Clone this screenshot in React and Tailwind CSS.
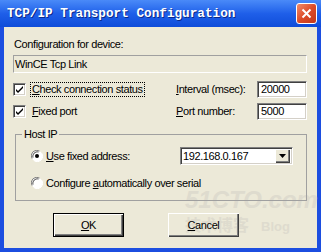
import React from 'react';

const sunken =
  'border border-t-[#808080] border-l-[#808080] border-b-white border-r-white shadow-[inset_1px_1px_0_#404040,inset_-1px_-1px_0_#d4d0c8]';

function CheckBox() {
  return (
    <div className={`w-[13px] h-[13px] bg-white flex items-center justify-center ${sunken}`}>
      <svg width="9" height="9" viewBox="0 0 9 9">
        <path d="M1 4 L3 6 L8 1 L8 3 L3 8 L1 6 Z" fill="#000" />
      </svg>
    </div>
  );
}

function Radio({ checked }) {
  return (
    <svg width="12" height="12" viewBox="0 0 12 12" className="shrink-0">
      <circle cx="6" cy="6" r="5.5" fill="#fff" />
      <path d="M1 8.5 A5.5 5.5 0 0 1 8.5 1" stroke="#808080" strokeWidth="1" fill="none" />
      <path d="M2 7.5 A4.5 4.5 0 0 1 7.5 2" stroke="#404040" strokeWidth="1" fill="none" />
      <path d="M3.5 11 A5.5 5.5 0 0 0 11 3.5" stroke="#fff" strokeWidth="1" fill="none" />
      {checked && <circle cx="6" cy="6" r="2" fill="#000" />}
    </svg>
  );
}

function U({ children }) {
  return <span className="underline underline-offset-[1px]">{children}</span>;
}

export default function App() {
  return (
    <div className="w-[321px] h-[252px] bg-[#1c4ee0] flex flex-col overflow-hidden font-['Liberation_Sans',Arial,sans-serif] text-[11px] leading-[13px] tracking-[-0.4px] text-black">
      {/* title bar */}
      <div className="h-[27px] shrink-0 flex items-center justify-between pl-[7px] pr-[4px] bg-linear-to-b from-[#4a8af8] via-[#1f5fe9] to-[#0e4cd9]">
        <span className="font-['Liberation_Mono',monospace] font-bold text-[12.7px] tracking-normal text-white [text-shadow:1px_1px_0_#0a2a8a]">
          TCP/IP Transport Configuration
        </span>
        <div className="w-[21px] h-[21px] rounded-[3px] border border-white bg-linear-to-br from-[#f08a6a] via-[#dd4b27] to-[#c2381a] flex items-center justify-center">
          <svg width="11" height="11" viewBox="0 0 11 11">
            <path d="M1.5 1.5 L9.5 9.5 M9.5 1.5 L1.5 9.5" stroke="#fff" strokeWidth="2" />
          </svg>
        </div>
      </div>

      {/* body */}
      <div className="relative isolate flex-1 mx-[4px] mb-[4px] bg-[#ece9d8] flex flex-col pl-[9px] pr-[10px] pt-[11px]">
        {/* watermark, behind the controls */}
        <div className="absolute -z-10 left-[181px] top-[160px] pointer-events-none select-none text-[#dedbce] tracking-normal">
          <div className="font-['Liberation_Sans',sans-serif] font-black italic text-[24px] leading-[26px]">51CTO.com</div>
          <div className="flex items-baseline gap-[12px]">
            <span className="font-['Noto_Sans_CJK_SC',sans-serif] font-bold text-[16px] leading-[22px]">技术博客</span>
            <span className="font-['Liberation_Sans',sans-serif] font-bold text-[13px]">Blog</span>
          </div>
        </div>

        <div className="pl-[1px]">Configuration for device:</div>
        <div className="mt-[4px] h-[18px] border border-t-[#a0a0a0] border-l-[#a0a0a0] border-b-white border-r-white px-[1px] flex items-center">
          WinCE Tcp Link
        </div>

        <div className="mt-[8px] flex flex-col gap-[5px]">
          <div className="h-[17px] flex items-center">
            <CheckBox />
            <span className="ml-[5px] px-[1px] outline outline-1 outline-dotted outline-black">
              <U>C</U>heck connection status
            </span>
            <span className="ml-auto w-[81px]">
              <U>I</U>nterval (msec):
            </span>
            <div className={`w-[50px] h-[17px] bg-white px-[3px] flex items-center ${sunken}`}>20000</div>
          </div>
          <div className="h-[17px] flex items-center">
            <CheckBox />
            <span className="ml-[6px]">
              <U>F</U>ixed port
            </span>
            <span className="ml-auto w-[81px]">
              <U>P</U>ort number:
            </span>
            <div className={`w-[50px] h-[17px] bg-white px-[3px] flex items-center ${sunken}`}>5000</div>
          </div>
        </div>

        <fieldset className="mt-[8px] ml-[2px] h-[73px] border border-[#a0a0a0] pl-[15px] pr-[13px]">
          <legend className="ml-[-9px] px-[2px]">Host IP</legend>
          <div className="mt-[6px] h-[18px] flex items-center">
            <Radio checked />
            <span className="ml-[3px]">
              <U>U</U>se fixed address:
            </span>
            <div className={`ml-auto w-[113px] h-[18px] bg-white flex items-center pl-[2px] pr-[2px] ${sunken}`}>
              <span className="flex-1">192.168.0.167</span>
              <div className="w-[15px] h-[14px] bg-[#ece9d8] flex items-center justify-center shadow-[inset_1px_1px_0_#fff,inset_-1px_-1px_0_#404040,inset_-2px_-2px_0_#808080]">
                <svg width="7" height="4" viewBox="0 0 7 4">
                  <path d="M0 0 H7 L3.5 4 Z" fill="#000" />
                </svg>
              </div>
            </div>
          </div>
          <div className="mt-[10px] h-[16px] flex items-center">
            <Radio />
            <span className="ml-[3px]">
              Configure <U>a</U>utomatically over serial
            </span>
          </div>
        </fieldset>

        <div className="mt-[12px] pl-[40px] flex gap-[44px]">
          <div className="w-[71px] h-[24px] border border-black flex items-center justify-center shadow-[inset_1px_1px_0_#fff,inset_-1px_-1px_0_#404040,inset_-2px_-2px_0_#808080]">
            <U>O</U>K
          </div>
          <div className="w-[71px] h-[24px] flex items-center justify-center shadow-[inset_1px_1px_0_#fff,inset_-1px_-1px_0_#404040,inset_-2px_-2px_0_#808080]">
            <U>C</U>ancel
          </div>
        </div>
      </div>
    </div>
  );
}
